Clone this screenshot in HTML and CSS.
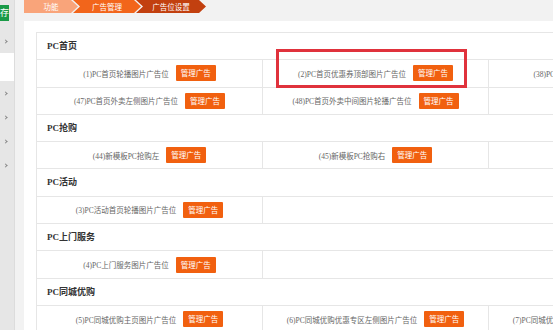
FILE: index.html
```html
<!DOCTYPE html>
<html lang="zh-CN">
<head>
    <meta charset="UTF-8">
    <title>广告位设置</title>
    <link rel="stylesheet" href="styles.css">
</head>
<body>
    <div id="layout">

        <aside class="sidebar">
            <div class="saveBtn">保存</div>
            <ul class="sideMenu">
                <li><span class="arrow"></span></li>
                <li class="active"></li>
                <li><span class="arrow"></span></li>
                <li><span class="arrow"></span></li>
                <li><span class="arrow"></span></li>
                <li><span class="arrow"></span></li>
            </ul>
        </aside>

        <div class="main">
            <nav class="crumbs">
                <span class="crumb first">功能</span>
                <span class="crumb second">广告管理</span>
                <span class="crumb third">广告位设置</span>
            </nav>

            <section class="panel">
                <div class="highlight"></div>
                <div class="adTable">

                    <div class="groupTitle">PC首页</div>
                    <div class="adRow">
                        <div class="adCell"><span class="adName">(1)PC首页轮播图片广告位</span><a class="adBtn">管理广告</a></div>
                        <div class="adCell"><span class="adName">(2)PC首页优惠券顶部图片广告位</span><a class="adBtn">管理广告</a></div>
                        <div class="adCell"><span class="adName">(38)PC首页品牌图片广告位</span><a class="adBtn">管理广告</a></div>
                    </div>
                    <div class="adRow">
                        <div class="adCell"><span class="adName">(47)PC首页外卖左侧图片广告位</span><a class="adBtn">管理广告</a></div>
                        <div class="adCell"><span class="adName">(48)PC首页外卖中间图片轮播广告位</span><a class="adBtn">管理广告</a></div>
                    </div>

                    <div class="groupTitle">PC抢购</div>
                    <div class="adRow">
                        <div class="adCell"><span class="adName">(44)新模板PC抢购左</span><a class="adBtn">管理广告</a></div>
                        <div class="adCell"><span class="adName">(45)新模板PC抢购右</span><a class="adBtn">管理广告</a></div>
                    </div>

                    <div class="groupTitle">PC活动</div>
                    <div class="adRow">
                        <div class="adCell"><span class="adName">(3)PC活动首页轮播图片广告位</span><a class="adBtn">管理广告</a></div>
                    </div>

                    <div class="groupTitle">PC上门服务</div>
                    <div class="adRow">
                        <div class="adCell"><span class="adName">(4)PC上门服务图片广告位</span><a class="adBtn">管理广告</a></div>
                    </div>

                    <div class="groupTitle">PC同城优购</div>
                    <div class="adRow">
                        <div class="adCell"><span class="adName">(5)PC同城优购主页图片广告位</span><a class="adBtn">管理广告</a></div>
                        <div class="adCell"><span class="adName">(6)PC同城优购优惠专区左侧图片广告位</span><a class="adBtn">管理广告</a></div>
                        <div class="adCell"><span class="adName">(7)PC同城优购优惠专区右侧图片广告位</span><a class="adBtn">管理广告</a></div>
                    </div>

                </div>
            </section>
        </div>

    </div>
</body>
</html>
```

FILE: styles.css
```css
* {
    box-sizing: border-box;
}
html, body {
    margin: 0;
    height: 100%;
    overflow: hidden;
}
body {
    background-color: #f2f2f2;
    font-family: "Liberation Serif", "Noto Sans CJK SC", serif;
    color: #555;
}
#layout {
    display: flex;
    height: 100%;
}

/* left menu, mostly scrolled out of view */
.sidebar {
    width: 15px;
    flex-shrink: 0;
    background-color: #e6e6e6;
    border-right: 1px solid #dcdcdc;
    overflow: hidden;
    padding-top: 5px;
}
.saveBtn {
    width: 9px;
    height: 16px;
    background-color: #1a9a47;
    color: #fff;
    font-size: 9px;
    line-height: 16px;
    white-space: nowrap;
    direction: rtl;
    overflow: hidden;
    font-family: "Noto Sans CJK SC", sans-serif;
}
.sideMenu {
    list-style: none;
    margin: 8px 0 0 0;
    padding: 0;
}
.sideMenu li {
    height: 24px;
    display: flex;
    align-items: center;
    padding-left: 4px;
}
.sideMenu li.active {
    background-color: #fff;
    height: 28px;
}
.arrow {
    width: 3px;
    height: 3px;
    border-right: 1px solid #888;
    border-bottom: 1px solid #888;
    transform: rotate(-45deg);
}

.main {
    flex: 1;
    padding-left: 9px;
    min-width: 0;
}

/* breadcrumb */
.crumbs {
    display: flex;
    height: 13px;
    margin-bottom: 8px;
}
.crumb {
    height: 13px;
    line-height: 13px;
    color: #fff;
    font-size: 7.5px;
    font-family: "Noto Sans CJK SC", sans-serif;
    text-align: center;
    clip-path: polygon(0 0, calc(100% - 7px) 0, 100% 50%, calc(100% - 7px) 100%, 0 100%, 7px 50%);
    margin-right: -5px;
}
.crumb.first {
    width: 54px;
    background-color: #f9a47a;
    clip-path: polygon(0 0, calc(100% - 7px) 0, 100% 50%, calc(100% - 7px) 100%, 0 100%);
}
.crumb.second {
    width: 68px;
    background-color: #f2651b;
}
.crumb.third {
    width: 70px;
    background-color: #c2400f;
}

/* white panel */
.panel {
    position: relative;
    background-color: #fff;
    height: 100%;
    padding: 11px 0 0 12px;
}
.highlight {
    position: absolute;
    left: 252px;
    top: 28px;
    width: 191px;
    height: 39px;
    border: 3px solid #e0323c;
    z-index: 2;
}
.adTable {
    width: 720px;
    border-top: 1px solid #e6e6e6;
    border-left: 1px solid #e6e6e6;
}
.groupTitle {
    height: 27.3px;
    line-height: 26px;
    padding-left: 10px;
    font-size: 9px;
    font-weight: bold;
    color: #333;
    border-bottom: 1px solid #e6e6e6;
}
.adRow {
    display: flex;
    height: 27.3px;
    border-bottom: 1px solid #e6e6e6;
}
.adCell {
    width: 226px;
    flex-shrink: 0;
    display: flex;
    align-items: center;
    justify-content: center;
    gap: 7px;
    border-right: 1px solid #e6e6e6;
    white-space: nowrap;
}
.adName {
    font-size: 7.5px;
    color: #666;
}
.adBtn {
    display: inline-block;
    width: 40px;
    height: 16px;
    line-height: 16px;
    text-align: center;
    background-color: #f1600f;
    color: #fff;
    font-size: 7.5px;
    font-family: "Noto Sans CJK SC", sans-serif;
    border-radius: 1px;
}
```
